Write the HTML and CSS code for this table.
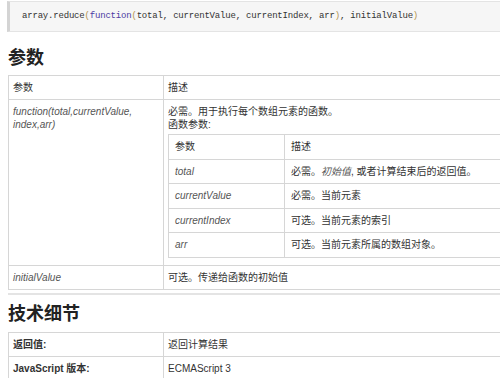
FILE: index.html
```html
<!DOCTYPE html>
<html lang="zh">
<head>
<meta charset="utf-8">
<link rel="stylesheet" href="styles.css">
</head>
<body>
<div class="page">
  <div class="code"><span class="pl">array.reduce</span><span class="pn">(</span><span class="kw">function</span><span class="pn">(</span>total, currentValue, currentIndex, arr<span class="pn">)</span>, initialValue<span class="pn">)</span></div>

  <h2 class="title">参数</h2>
  <table class="tbl">
    <tr><td class="c1">参数</td><td>描述</td></tr>
    <tr>
      <td class="c1"><i>function(total,currentValue, index,arr)</i></td>
      <td>
        <div class="desc">必需。用于执行每个数组元素的函数。<br>函数参数:</div>
        <table class="tbl inner">
          <tr><td class="ic1">参数</td><td>描述</td></tr>
          <tr><td class="ic1"><i>total</i></td><td>必需。<i>初始值</i>, 或者计算结束后的返回值。</td></tr>
          <tr><td class="ic1"><i>currentValue</i></td><td>必需。当前元素</td></tr>
          <tr><td class="ic1"><i>currentIndex</i></td><td>可选。当前元素的索引</td></tr>
          <tr><td class="ic1"><i>arr</i></td><td>可选。当前元素所属的数组对象。</td></tr>
        </table>
      </td>
    </tr>
    <tr><td class="c1"><i>initialValue</i></td><td>可选。传递给函数的初始值</td></tr>
  </table>

  <div class="rule"></div>

  <h2 class="title title2">技术细节</h2>
  <table class="tbl">
    <tr><th class="c1">返回值:</th><td>返回计算结果</td></tr>
    <tr><th class="c1">JavaScript 版本:</th><td>ECMAScript 3</td></tr>
  </table>
</div>
</body>
</html>
```

FILE: styles.css
```css
html, body {
  margin: 0;
  padding: 0;
  background: #ffffff;
  overflow: hidden;
}

body {
  font-family: "Liberation Sans", "Noto Sans CJK SC", sans-serif;
  font-size: 10px;
  color: #333333;
}

.page {
  padding-left: 8px;
}

.code {
  margin: 1px 0 0 -1px;
  background: #f6f6f6;
  border: 1px solid #e4e4e4;
  border-right: 0;
  border-left: 3px solid #d4d4d4;
  padding: 8px 12px;
  font-family: "Liberation Mono", "DejaVu Sans Mono", monospace;
  font-size: 9px;
  letter-spacing: -0.19px;
  line-height: 13px;
  color: #333333;
  white-space: nowrap;
}

.code .kw { color: #4b3ba3; }
.code .pn { color: #b59550; }

.title {
  margin: 12px 0 7px;
  font-family: "Noto Sans CJK SC", sans-serif;
  font-size: 18px;
  line-height: 24px;
  font-weight: bold;
  color: #222222;
}

.title2 {
  margin: 5px 0 8px;
}

.tbl {
  width: 100%;
  border-collapse: collapse;
  border: 1px solid #d6d6d6;
  border-right: 0;
}

.tbl td, .tbl th {
  border: 1px solid #d6d6d6;
  padding: 5px 4px;
  line-height: 13px;
  text-align: left;
  vertical-align: top;
  font-weight: normal;
  color: #333333;
}

.tbl td:last-child {
  border-right: 0;
  padding-right: 0;
}

.tbl th {
  font-weight: bold;
}

.tbl .c1 {
  width: 146px;
}

.tbl i {
  color: #555555;
}

.desc {
  line-height: 13px;
}

.tbl.inner {
  margin: 3px 0 2px;
}

.tbl.inner td {
  padding: 5px 6px;
  line-height: 13.6px;
}

.tbl.inner td:last-child {
  padding-right: 0;
}

.tbl.inner .ic1 {
  width: 103px;
}

.rule {
  margin-top: 3px;
  height: 0;
  border-top: 2px solid #e4e4e4;
}
```
